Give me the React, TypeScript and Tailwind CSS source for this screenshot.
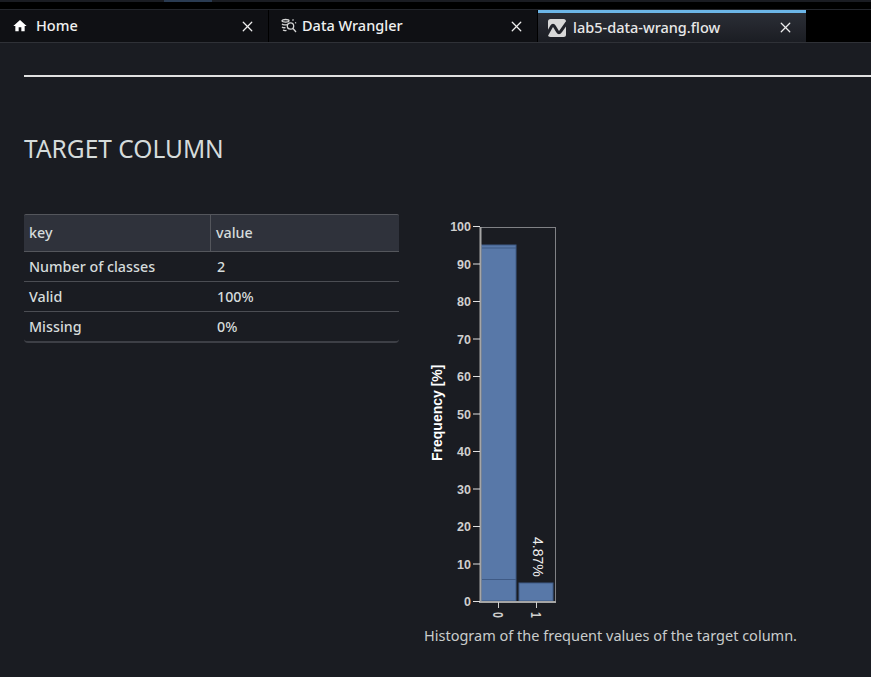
import { X } from "lucide-react";

const rows = [
  ["Number of classes", "2"],
  ["Valid", "100%"],
  ["Missing", "0%"],
];

const ticks = [100, 90, 80, 70, 60, 50, 40, 30, 20, 10, 0];

function HomeIcon() {
  return (
    <svg width="16" height="16" viewBox="0 0 24 24" fill="#ffffff">
      <path d="M10 20v-6h4v6h5v-8h3L12 3 2 12h3v8z" />
    </svg>
  );
}

function WranglerIcon() {
  return (
    <svg width="16" height="16" viewBox="0 0 16 16" fill="none" stroke="#d5d5d5" strokeWidth="1.3">
      <ellipse cx="4.5" cy="2.8" rx="3.5" ry="1.3" />
      <path d="M1 6c1 1 4 1 5 .6M1 9c1 .8 2.5 .8 3.5 .6M2 12c1 .6 2.5 .6 3.5 .3" />
      <circle cx="9.5" cy="8" r="3.2" />
      <path d="M12 10.5l3 3.5M11.5 2.5l1-1M14 5l1.2-.4" />
    </svg>
  );
}

function FlowIcon() {
  return (
    <svg width="18" height="18" viewBox="0 0 18 18">
      <rect width="18" height="18" rx="2.5" fill="#d8d8d8" />
      <path d="M-1 15.5 L3.5 7.5 Q5 5 6.5 7.5 L9.5 12.5 Q11 15 12.5 12.5 L19 3.5" fill="none" stroke="#22242b" strokeWidth="3" />
    </svg>
  );
}

function Chart() {
  const y = (v: number) => 601.5 - v * 3.75;
  return (
    <svg width="150" height="412" viewBox="420 214 150 412" className="block" fontFamily="'Liberation Sans', sans-serif">
      <rect x="480.5" y="227.5" width="75" height="374" fill="none" stroke="#808185" />
      <rect x="481.5" y="245" width="34.5" height="356" fill="#5878a8" stroke="#3f5a85" />
      <line x1="481" x2="516" y1="248" y2="248" stroke="#3f5a85" />
      <line x1="481" x2="516" y1="579.5" y2="579.5" stroke="#3f5a85" />
      <rect x="519" y="583" width="34" height="18" fill="#5878a8" stroke="#3f5a85" />
      <line x1="480.5" x2="480.5" y1="227" y2="602" stroke="#a5a5a5" strokeWidth="2" />
      <line x1="479" x2="556" y1="602" y2="602" stroke="#a5a5a5" strokeWidth="2" />
      {ticks.map((t) => (
        <g key={t}>
          <line x1="473" x2="480" y1={y(t)} y2={y(t)} stroke="#e0e0e0" />
          <text x="471" y={y(t) + 4.5} textAnchor="end" fontSize="12.5" fontWeight="700" fill="#cfcfcf">
            {t}
          </text>
        </g>
      ))}
      <line x1="498.5" x2="498.5" y1="602" y2="608" stroke="#d0d0d0" />
      <line x1="536.5" x2="536.5" y1="602" y2="608" stroke="#d0d0d0" />
      <text transform="translate(493 612) rotate(90) scale(0.75 1)" fontSize="14" fontWeight="700" fill="#cfcfcf">0</text>
      <text transform="translate(531 612) rotate(90) scale(0.75 1)" fontSize="14" fontWeight="700" fill="#cfcfcf">1</text>
      <text transform="translate(533 537) rotate(90)" fontSize="14" fill="#eeeeee">4.87%</text>
      <text transform="translate(442 461) rotate(-90)" fontSize="14" fontWeight="700" fill="#ffffff">Frequency [%]</text>
    </svg>
  );
}

export default function App() {
  return (
    <div className="w-[871px] h-[677px] overflow-hidden bg-[#1a1c22] font-['Noto_Sans',sans-serif]">
      <div className="h-[2px] bg-[#1a1c22] flex">
        <div className="ml-[164px] w-[48px] bg-[#2a3b52]" />
      </div>
      <div className="h-[7px] bg-black" />
      <div className="h-[34px] flex items-start bg-black border-t border-b border-t-[#24262c] border-b-[#2f3137]">
        <div className="w-[269px] h-[32px] flex items-center pl-[12px] pr-[12px] bg-[#0f1014] border-r border-black">
          <div className="w-[16px] flex justify-center shrink-0"><HomeIcon /></div>
          <span className="ml-[8px] flex-1 text-[14.5px] font-medium text-[#f0f0f0]">Home</span>
          <X size={17} strokeWidth={1.8} className="text-[#eeeeee]" />
        </div>
        <div className="w-[269px] h-[32px] flex items-center pl-[12px] pr-[12px] bg-[#0f1014] border-r border-black">
          <div className="w-[16px] flex justify-center shrink-0"><WranglerIcon /></div>
          <span className="ml-[5px] flex-1 text-[14.5px] font-medium text-[#f0f0f0]">Data Wrangler</span>
          <X size={17} strokeWidth={1.8} className="text-[#eeeeee]" />
        </div>
        <div className="w-[268px] h-[32px] flex items-center pl-[10px] pr-[12px] border-t-[3px] border-[#6cb6e8] bg-gradient-to-b from-[#2b2e36] to-[#1b1d23]">
          <div className="w-[18px] flex justify-center shrink-0"><FlowIcon /></div>
          <span className="ml-[7px] flex-1 text-[14.5px] font-medium text-[#e8e8e8]">lab5-data-wrang.flow</span>
          <X size={17} strokeWidth={1.8} className="text-[#eeeeee]" />
        </div>
      </div>
      <div className="pl-[24px]">
        <div className="mt-[32px] h-[2px] bg-[#e0e0e0]" />
        <h1 className="mt-[56px] text-[24.5px] leading-[32px] text-[#d5dbdb] font-normal">TARGET COLUMN</h1>
        <div className="mt-[49px] flex items-start">
          <div className="w-[375px] shrink-0 text-[14.3px] font-medium">
            <div className="h-[38px] flex items-center bg-[#2f323b] border-y border-[#54565c] text-[#d5dbdb] rounded-t-[2px]">
              <div className="w-[187px] h-full flex items-center pl-[5px] border-r border-[#54565c]">key</div>
              <div className="pl-[5px]">value</div>
            </div>
            {rows.map(([k, v], i) => (
              <div key={k} className={i === 2 ? "h-[31px] flex items-center border-b-2 border-[#3d3f46] rounded-b-[4px] text-[#d5dbdb]" : "h-[30px] flex items-center border-b border-[#4b4d53] text-[#d5dbdb]"}>
                <div className="w-[188px] pl-[5px]">{k}</div>
                <div className="pl-[5px]">{v}</div>
              </div>
            ))}
          </div>
          <div className="ml-[21px] flex flex-col">
            <Chart />
            <p className="-mt-[1px] ml-[4px] text-[14.5px] whitespace-nowrap text-[#c9cccc]">Histogram of the frequent values of the target column.</p>
          </div>
        </div>
      </div>
    </div>
  );
}
